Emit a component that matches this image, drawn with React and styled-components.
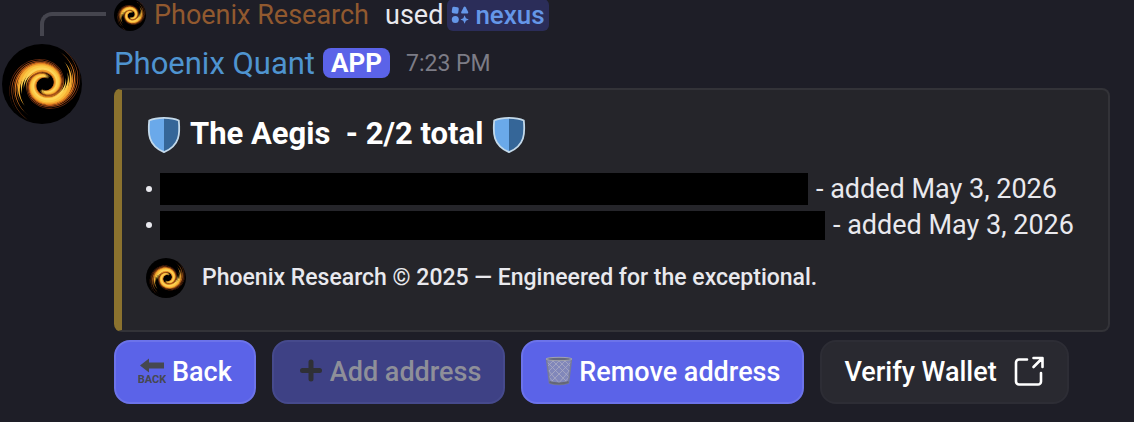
import React from "react";
import styled, { createGlobalStyle } from "styled-components";

const GlobalStyle = createGlobalStyle`
  * {
    box-sizing: border-box;
  }

  body {
    margin: 0;
    background: #1e1e27;
    color: #e9e9ee;
    font-family: Roboto, "Noto Sans", sans-serif;
    font-size: 27px;
    overflow-x: hidden;
  }
`;

const addresses = [
  { id: 1, width: 648, height: 32, added: "May 3, 2026" },
  { id: 2, width: 665, height: 29, added: "May 3, 2026" },
];

// radius factor, thickness, start offset, colour
const strands = [
  [1.14, 0.7, -0.3, "#7a3212"],
  [1.07, 0.9, -0.7, "#a84c18"],
  [1.01, 1.1, -0.2, "#b4561a"],
  [0.96, 1.6, -0.6, "#d8741f"],
  [0.9, 2.6, -0.1, "#e88a24"],
  [0.84, 4, -0.3, "#f5ae33"],
  [0.76, 5, 0.1, "#fbc845"],
  [0.68, 4.4, 0.3, "#fdd55a"],
  [0.61, 2.4, 0.2, "#f0a02c"],
  [0.56, 1, 0.5, "#c9661d"],
];

// a logarithmic spiral ribbon that thins out towards both of its ends
const ribbon = (start, factor, thickness, offset) => {
  const outer = [];
  const inner = [];
  const end = 5.9;
  for (let t = offset; t <= end; t += 0.1) {
    const taper = Math.min(1, (t - offset) / 1.3, (end - t) / 1.6);
    const r = 34 * factor * Math.exp(-0.205 * t);
    const half = (thickness * taper * Math.exp(-0.06 * t)) / 2;
    const point = (radius) =>
      `${(43 + radius * Math.cos(start + t)).toFixed(2)} ${(
        40 +
        radius * Math.sin(start + t) * 0.96
      ).toFixed(2)}`;
    outer.push(point(r + half));
    inner.unshift(point(r - half));
  }
  return `M${[...outer, ...inner].join("L")}z`;
};

const Swirl = ({ size }) => (
  <SwirlSvg viewBox="0 0 80 80" $size={size} aria-hidden="true">
    <circle cx="40" cy="40" r="40" fill="#000" />
    {[-0.6, 2.6].map((start) =>
      strands.map(([factor, thickness, offset, color]) => (
        <path
          key={`${start}-${factor}`}
          d={ribbon(start, factor, thickness, offset)}
          fill={color}
        />
      ))
    )}
  </SwirlSvg>
);

const AppsIcon = () => (
  <svg width="18" height="18" viewBox="0 0 18 18" fill="currentColor" aria-hidden="true">
    <rect x="1" y="1" width="6.6" height="6.6" rx="1.6" transform="rotate(8 4 4)" />
    <path d="M12.7 1.2c.5-.9 1.5-.9 2 0l2.4 4.6c.5 1-.1 1.8-1 1.8h-4.8c-.9 0-1.5-.8-1-1.8z" />
    <circle cx="4.3" cy="13.4" r="3.5" />
    <path d="M13.6 9.3l1.3 2.9 2.9 1.3-2.9 1.3-1.3 2.9-1.3-2.9-2.9-1.3 2.9-1.3z" />
  </svg>
);

const ShieldIcon = () => (
  <svg width="36" height="42" viewBox="-1 -4 36 42" aria-hidden="true">
    <path d="M17 2C11.500 2 6.500 2.700 2.500 4.500 1 14-.5 29 17 36z" fill="#6aa9ea" />
    <path d="M17 2c5.500 0 10.500.7 14.500 2.500C33 14 34.500 29 17 36z" fill="#356698" />
    <path
      d="M17 1.800C11.500 1.800 6 2.600 2.200 4.500 1 17 .8 29.500 17 36.200 33.200 29.500 33 17 31.800 4.500 28 2.600 22.500 1.800 17 1.800z"
      fill="none"
      stroke="#c3d9ea"
      strokeWidth="1.8"
      strokeLinejoin="round"
    />
  </svg>
);

const BackIcon = () => (
  <svg width="28" height="28" viewBox="0 0 28 28" aria-hidden="true">
    <path d="M2 7.500L11 .5v4h15v6H11v4z" fill="#464850" />
    <text
      x="14"
      y="25"
      textAnchor="middle"
      fontFamily="Roboto, sans-serif"
      fontWeight="700"
      fontSize="11"
      fill="#464850"
    >
      BACK
    </text>
  </svg>
);

const PlusIcon = () => (
  <svg width="28" height="28" viewBox="0 0 28 28" aria-hidden="true">
    <path d="M15 4v17M6.500 12.500h17" stroke="#2f3036" strokeWidth="5" strokeLinecap="round" />
  </svg>
);

const TrashIcon = () => (
  <svg width="28" height="32" viewBox="0 0 28 32" aria-hidden="true">
    <path d="M1.500 3L4.500 27q9.500 3 19 0L26.500 3z" fill="#8187ba" />
    <path
      d="M2 6l21 21M7 4l18 18M13 4l12 12M19 4l7 7M3 14l12 14M4 21l6 7M26 6L5 27M21 4L4 21M15 4L3 16M9 4L2 11M25 14L13 28M24 21l-6 7"
      stroke="#a9abc4"
      strokeWidth="0.8"
    />
    <path d="M1.500 3L4.500 27q9.500 3 19 0L26.500 3" fill="none" stroke="#777b98" strokeWidth="1.5" />
    <path d="M4.500 26q9.500 3 19 0" fill="none" stroke="#646777" strokeWidth="2" />
    <ellipse cx="14" cy="3" rx="13" ry="1.7" fill="#65697d" stroke="#a2a4b0" strokeWidth="1" />
  </svg>
);

const ExternalIcon = () => (
  <svg
    width="32"
    height="32"
    viewBox="0 0 32 32"
    fill="none"
    stroke="currentColor"
    strokeWidth="2.6"
    strokeLinecap="round"
    strokeLinejoin="round"
    aria-hidden="true"
  >
    <path d="M14 3.500H6a3 3 0 0 0-3 3v19a3 3 0 0 0 3 3h19a3 3 0 0 0 3-3v-8.500" />
    <path d="M20.500 2H29.500V11M29 2.500l-8.500 8.500" />
  </svg>
);

const App = () => {
  return (
    <>
      <GlobalStyle />
      <Message>
        <Spine />
        <Reply>
          <Swirl size={32} />
          <ReplyName>Phoenix Research</ReplyName>
          <span>used</span>
          <Command href="#">
            <AppsIcon />
            nexus
          </Command>
        </Reply>
        <AvatarCell>
          <Swirl size={80} />
        </AvatarCell>
        <Content>
          <Header>
            <Author>Phoenix Quant</Author>
            <Badge>APP</Badge>
            <Time>7:23 PM</Time>
          </Header>
          <Embed>
            <Title>
              <ShieldIcon />
              <span>The Aegis &nbsp;- 2/2 total</span>
              <ShieldIcon />
            </Title>
            <List>
              {addresses.map((item) => (
                <Item key={item.id}>
                  <Redacted $width={item.width} $height={item.height} />
                  <span>- added {item.added}</span>
                </Item>
              ))}
            </List>
            <Footer>
              <Swirl size={40} />
              <span>Phoenix Research © 2025 — Engineered for the exceptional.</span>
            </Footer>
          </Embed>
          <Actions>
            <Button type="button">
              <BackIcon />
              Back
            </Button>
            <Button type="button" disabled>
              <PlusIcon />
              Add address
            </Button>
            <Button type="button">
              <TrashIcon />
              Remove address
            </Button>
            <LinkButton href="#">
              Verify Wallet
              <ExternalIcon />
            </LinkButton>
          </Actions>
        </Content>
      </Message>
    </>
  );
};

const SwirlSvg = styled.svg`
  display: block;
  flex: none;
  width: ${({ $size }) => $size}px;
  height: ${({ $size }) => $size}px;
`;

const Message = styled.article`
  display: grid;
  grid-template-columns: 114px minmax(0, 1fr);
  row-gap: 8px;
  padding-right: 24px;
`;

const Spine = styled.div`
  height: 24px;
  margin: 12px 8px 0 40px;
  border-top: 4px solid #45454e;
  border-left: 4px solid #45454e;
  border-top-left-radius: 12px;
`;

const Reply = styled.div`
  display: flex;
  align-items: center;
  height: 30px;
  white-space: nowrap;
  line-height: 30px;
`;

const ReplyName = styled.span`
  margin: 0 16px 0 8px;
  color: #91592f;
`;

const Command = styled.a`
  display: flex;
  align-items: center;
  gap: 6px;
  margin-left: 4px;
  padding: 1px 4px;
  border-radius: 6px;
  background: #2b2d59;
  color: #6597e8;
  font-size: 26px;
  font-weight: 500;
  text-decoration: none;
`;

const AvatarCell = styled.div`
  padding-left: 2px;
`;

const Content = styled.div`
  min-width: 0;
`;

const Header = styled.header`
  display: flex;
  align-items: center;
  height: 38px;
  margin-bottom: 6px;
  white-space: nowrap;
`;

const Author = styled.span`
  color: #4f94d0;
  font-size: 31px;
`;

const Badge = styled.span`
  margin: 0 16px 0 8px;
  padding: 0 8px;
  border-radius: 8px;
  background: #5b63e8;
  color: #fff;
  font-size: 26px;
  font-weight: 700;
  line-height: 30px;
`;

const Time = styled.time`
  color: #7c7c86;
  font-size: 23px;
  line-height: 30px;
  padding-top: 2px;
`;

const Embed = styled.section`
  padding: 22px 32px 32px 24px;
  border: 2px solid #333338;
  border-left: 8px solid #8b722e;
  border-radius: 8px;
  background: #25252a;
`;

const Title = styled.h2`
  display: flex;
  align-items: center;
  gap: 8px;
  height: 42px;
  margin: 0 0 17px;
  color: #fff;
  font-size: 31px;
  font-weight: 700;
  white-space: nowrap;
`;

const List = styled.ul`
  margin: 0;
  padding: 0;
  list-style: none;
`;

const Item = styled.li`
  display: flex;
  align-items: center;
  gap: 8px;
  line-height: 36px;
  white-space: nowrap;

  &::before {
    content: "";
    flex: none;
    width: 6px;
    height: 6px;
    border-radius: 50%;
    background: #e9e9ee;
  }
`;

const Redacted = styled.span`
  flex: 0 1 ${({ $width }) => $width}px;
  height: ${({ $height }) => $height}px;
  background: #000;
`;

const Footer = styled.footer`
  display: flex;
  align-items: center;
  gap: 16px;
  margin-top: 15px;
  font-size: 23px;
  font-weight: 500;
  line-height: 40px;
`;

const Actions = styled.div`
  display: flex;
  flex-wrap: wrap;
  gap: 16px;
  margin-top: 8px;
`;

const Button = styled.button`
  display: flex;
  align-items: center;
  gap: 6px;
  height: 64px;
  padding: 0 22px;
  border: 2px solid #6c73ea;
  border-radius: 16px;
  background: #5b63e8;
  color: #fff;
  font: inherit;
  font-weight: 500;
  white-space: nowrap;
  cursor: pointer;

  &:disabled {
    border-color: #464a8c;
    background: #3e4185;
    color: #8e8f99;
    cursor: default;
  }
`;

const LinkButton = styled(Button).attrs({ as: "a" })`
  gap: 16px;
  border-color: #2d2d35;
  background: #292930;
  text-decoration: none;
`;

export default App;
